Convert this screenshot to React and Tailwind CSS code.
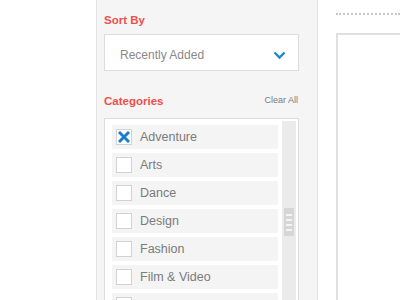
const categories = ["Adventure", "Arts", "Dance", "Design", "Fashion", "Film & Video", "Food"];

function Checkbox({ checked }) {
  return (
    <span className="w-[16px] h-[16px] bg-white border border-[#d2d2d2] flex items-center justify-center shrink-0">
      {checked && (
        <svg width="12" height="12" viewBox="0 0 12 12">
          <path d="M2 2 L10 10 M10 2 L2 10" stroke="#1b7fc8" strokeWidth="3" strokeLinecap="square" />
        </svg>
      )}
    </span>
  );
}

function Scrollbar() {
  return (
    <div className="w-[14px] mt-[2px] mr-[1px] bg-[#ebebeb] flex flex-col items-center pt-[87px]">
      <div className="w-[10px] h-[28px] bg-[#d6d6d6] flex flex-col items-center justify-center gap-[3px]">
        <span className="w-[6px] h-[2px] bg-[#f4f4f4]" />
        <span className="w-[6px] h-[2px] bg-[#f4f4f4]" />
        <span className="w-[6px] h-[2px] bg-[#f4f4f4]" />
        <span className="w-[6px] h-[2px] bg-[#f4f4f4]" />
      </div>
    </div>
  );
}

export default function App() {
  return (
    <div className="w-[400px] h-[300px] overflow-hidden flex bg-white font-['Liberation_Sans',Arial,sans-serif]">
      <div className="w-[96px] shrink-0 bg-white" />

      <div className="w-[222px] shrink-0 bg-[#f5f5f5] border-l border-r border-[#e3e3e3] pl-[7px] pr-[18px]">
        <h2 className="pt-[13px] text-[11.5px] leading-[14px] font-bold text-[#f04f4a]">Sort By</h2>
        <div className="mt-[7px] h-[37px] bg-white border border-[#dcdcdc] flex items-center justify-between pl-[15px] pr-[12px] pt-[5px]">
          <span className="text-[12px] text-[#8a8a8a]">Recently Added</span>
          <svg width="13" height="9" viewBox="0 0 13 9">
            <path d="M1.5 1.5 L6.5 6.5 L11.5 1.5" fill="none" stroke="#1a8ad4" strokeWidth="2.4" />
          </svg>
        </div>

        <div className="mt-[23px] flex items-center justify-between">
          <h2 className="text-[11.5px] leading-[14px] font-bold text-[#f04f4a]">Categories</h2>
          <button className="text-[9px] text-[#7a7a7a] mr-[1px]">Clear All</button>
        </div>

        <div className="mt-[10px] h-[200px] bg-white border border-[#dcdcdc] flex">
          <ul className="w-[173px] pl-[7px] pt-[6px] flex flex-col gap-[4px]">
            {categories.map((name, i) => (
              <li key={name} className="h-[24px] bg-[#f4f4f4] flex items-center pl-[4px] gap-[8px]">
                <Checkbox checked={i === 0} />
                <span className="text-[12.5px] text-[#7b7b7b]">{name}</span>
              </li>
            ))}
          </ul>
          <div className="w-[4px]" />
          <Scrollbar />
        </div>
      </div>

      <div className="flex-1 pl-[18px]">
        <div className="mt-[13px] border-t-2 border-dotted border-[#c8c8c8]" />
        <div className="mt-[18px] h-[300px] border-l-2 border-t-2 border-[#e0e0e0]" />
      </div>
    </div>
  );
}
